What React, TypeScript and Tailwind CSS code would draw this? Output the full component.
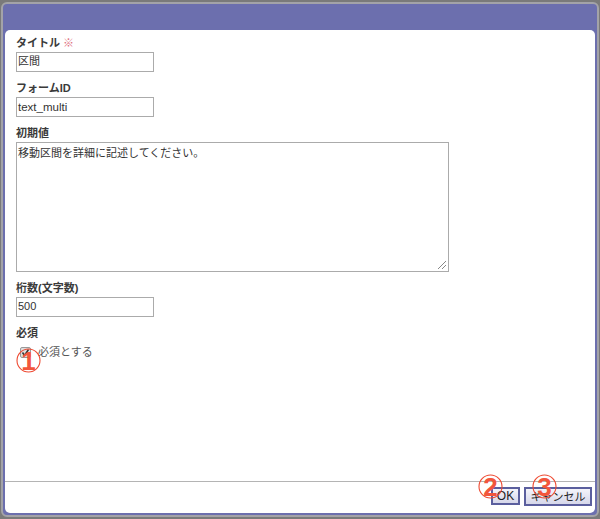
function Marker({ n, className }: { n: string; className: string }) {
  return (
    <div className={`absolute h-[25px] w-[25px] ${className}`}>
      <svg width="25" height="25" viewBox="0 0 25 25" className="absolute inset-0">
        <circle cx="12.5" cy="12.5" r="11.5" fill="none" stroke="#ee4a32" strokeWidth="1.1" />
      </svg>
      <span className="absolute inset-0 flex items-center justify-center font-['Liberation_Sans',sans-serif] text-[26px] font-bold leading-none text-[#f2563c]">{n}</span>
    </div>
  );
}
function Label({ children }: { children: React.ReactNode }) {
  return <div className="h-[16px] text-[11px] font-bold leading-[16px] text-[#3a3a3a]">{children}</div>;
}
function Field({ value }: { value: string }) {
  return (
    <div className="mt-px h-[20px] w-[138px] border border-[#ababab] bg-white pl-px text-[11px] leading-[17px] text-[#333]">{value}</div>
  );
}
export default function App() {
  return (
    <div className="relative h-[519px] w-[600px] overflow-hidden bg-[#7a7a7a] px-px pt-[2px] font-['Liberation_Sans','Noto_Sans_CJK_JP',sans-serif]">
      <div className="flex h-[515px] flex-col rounded-[6px] border-2 border-[#a3a3a8] bg-[#6c6fae] px-[2px] pb-[2px]">
        <div className="h-[26px] shrink-0" />
        <div className="relative flex flex-1 flex-col rounded-[5px] bg-white">
          <div className="flex-1 pl-[11px] pt-[5px]">
            <Label>タイトル <span className="text-[#e0707f]">※</span></Label>
            <Field value="区間" />
            <div className="mt-[8px]"><Label>フォームID</Label></div>
            <div className="mt-px h-[20px] w-[138px] border border-[#ababab] bg-white pl-px text-[11.5px] leading-[18px] text-[#333]">text_multi</div>
            <div className="mt-[8px]"><Label>初期値</Label></div>
            <div className="relative mt-px h-[130px] w-[433px] border border-[#ababab] pl-px pt-[2px] text-[11px] leading-[16px] text-[#333]">
              移動区間を詳細に記述してください。
              <svg width="10" height="10" viewBox="0 0 10 10" className="absolute bottom-px right-px">
                <path d="M1 9 L9 1 M5 9 L9 5" stroke="#888" strokeWidth="1" />
              </svg>
            </div>
            <div className="mt-[8px]"><Label>桁数(文字数)</Label></div>
            <Field value="500" />
            <div className="mt-[8px]"><Label>必須</Label></div>
            <div className="mt-[3px] flex items-center text-[11px] leading-[16px] text-[#555]">
              <div className="ml-[4px] flex h-[11px] w-[11px] items-center justify-center rounded-[2px] border border-[#999] bg-[#dedede]">
                <svg width="9" height="9" viewBox="0 0 9 9"><path d="M1.5 4.5 L3.5 7.5 L7.5 1.5" fill="none" stroke="#333" strokeWidth="1.5" /></svg>
              </div>
              <span className="ml-[7px]">必須とする</span>
            </div>
          </div>
          <div className="flex h-[32px] shrink-0 items-start justify-end gap-[4px] border-t border-[#b4b4b4] pr-[3px] pt-[5px]">
            <button className="h-[18px] w-[29px] border-2 border-[#5b5f9e] bg-gradient-to-b from-[#f4f4fa] to-[#d6d7ea] text-[12px] leading-[14px] text-[#222]">OK</button>
            <button className="h-[19px] w-[68px] border-2 border-[#5b5f9e] bg-gradient-to-b from-[#f4f4fa] to-[#d6d7ea] text-[11px] leading-[14px] text-[#222]">キャンセル</button>
          </div>
        </div>
      </div>
      <Marker n="1" className="left-[16px] top-[348px]" />
      <Marker n="2" className="left-[478px] top-[474px]" />
      <Marker n="3" className="left-[532px] top-[474px]" />
    </div>
  );
}
